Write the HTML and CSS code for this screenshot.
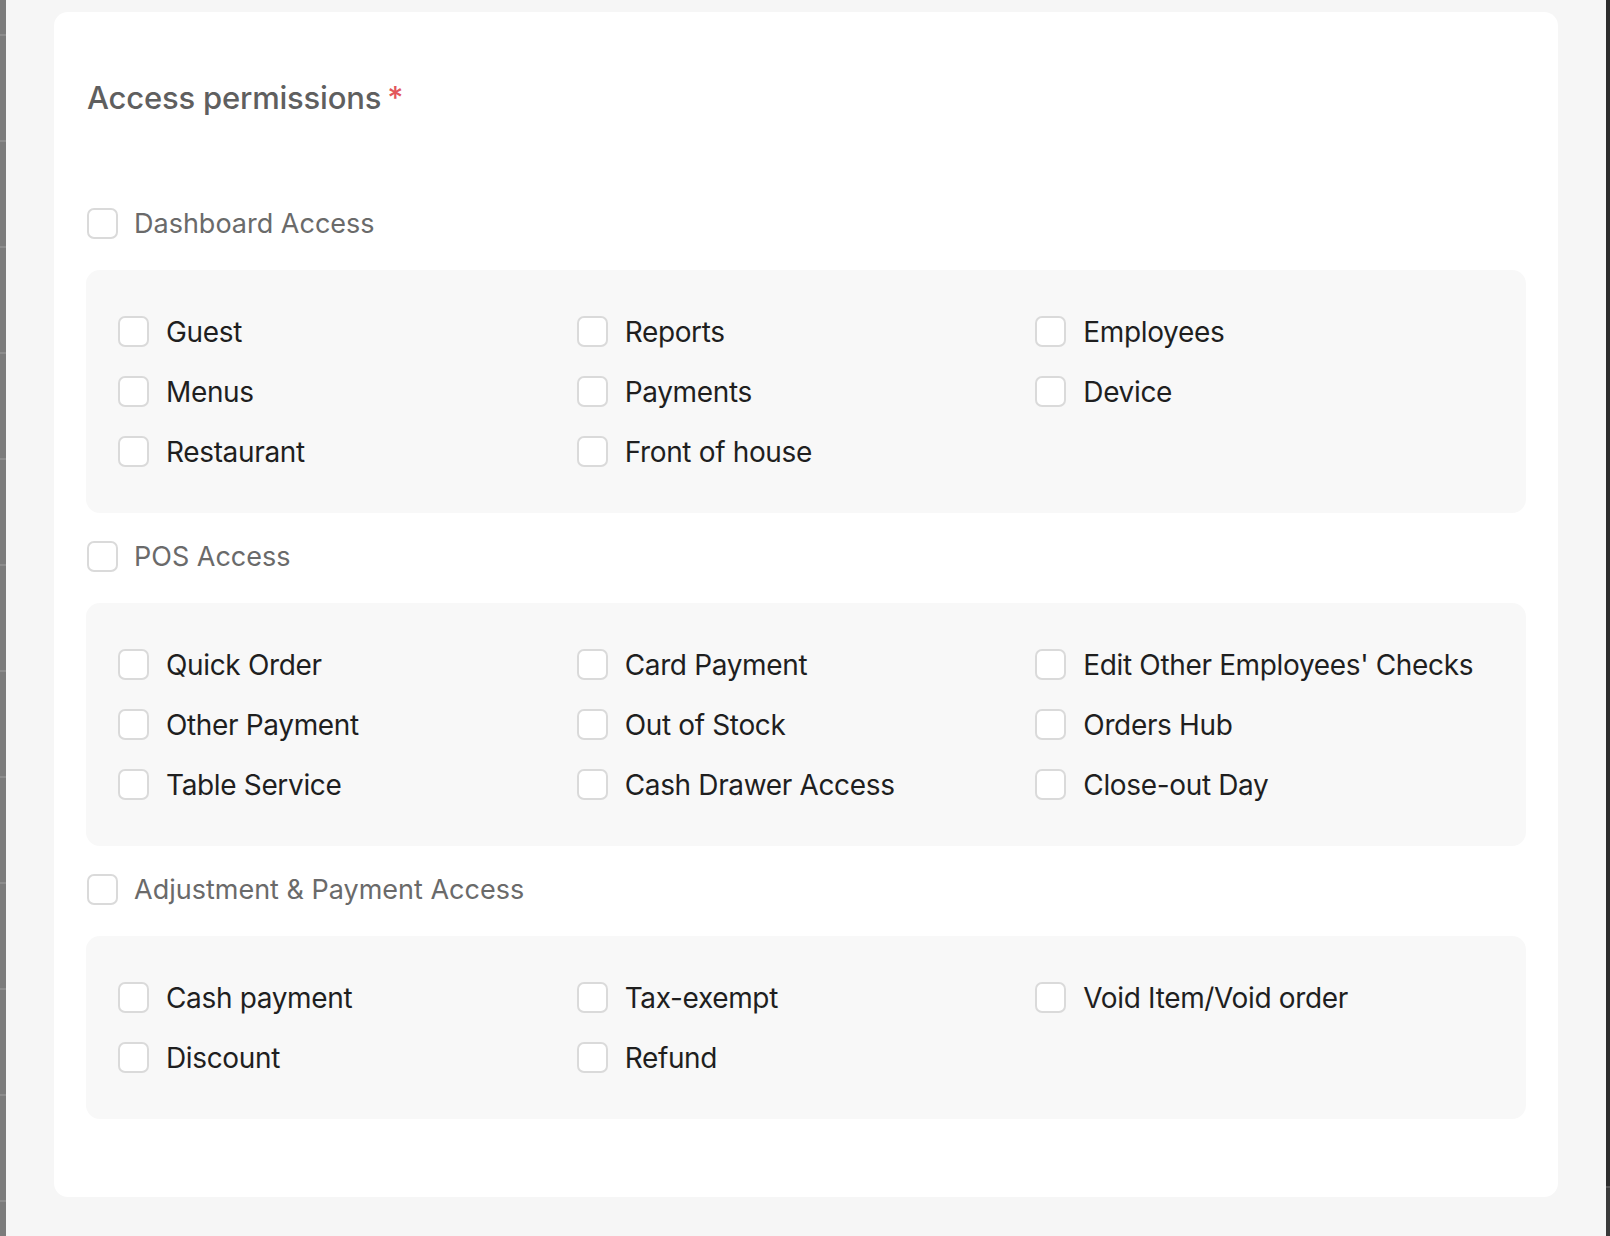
FILE: index.html
```html
<!DOCTYPE html>
<html lang="en">
<head>
<meta charset="utf-8">
<title>Access permissions</title>
<link rel="stylesheet" href="styles.css">
</head>
<body>
<div class="edge-left"></div>
<main class="stage">
  <section class="card">
    <h2 class="title">Access permissions <span class="req">*</span></h2>

    <label class="group-head"><input type="checkbox" class="cb"><span>Dashboard Access</span></label>
    <div class="panel">
      <label class="item"><input type="checkbox" class="cb"><span>Guest</span></label>
      <label class="item"><input type="checkbox" class="cb"><span>Reports</span></label>
      <label class="item"><input type="checkbox" class="cb"><span>Employees</span></label>
      <label class="item"><input type="checkbox" class="cb"><span>Menus</span></label>
      <label class="item"><input type="checkbox" class="cb"><span>Payments</span></label>
      <label class="item"><input type="checkbox" class="cb"><span>Device</span></label>
      <label class="item"><input type="checkbox" class="cb"><span>Restaurant</span></label>
      <label class="item"><input type="checkbox" class="cb"><span>Front of house</span></label>
    </div>

    <label class="group-head"><input type="checkbox" class="cb"><span>POS Access</span></label>
    <div class="panel">
      <label class="item"><input type="checkbox" class="cb"><span>Quick Order</span></label>
      <label class="item"><input type="checkbox" class="cb"><span>Card Payment</span></label>
      <label class="item"><input type="checkbox" class="cb"><span>Edit Other Employees' Checks</span></label>
      <label class="item"><input type="checkbox" class="cb"><span>Other Payment</span></label>
      <label class="item"><input type="checkbox" class="cb"><span>Out of Stock</span></label>
      <label class="item"><input type="checkbox" class="cb"><span>Orders Hub</span></label>
      <label class="item"><input type="checkbox" class="cb"><span>Table Service</span></label>
      <label class="item"><input type="checkbox" class="cb"><span>Cash Drawer Access</span></label>
      <label class="item"><input type="checkbox" class="cb"><span>Close-out Day</span></label>
    </div>

    <label class="group-head"><input type="checkbox" class="cb"><span>Adjustment &amp; Payment Access</span></label>
    <div class="panel">
      <label class="item"><input type="checkbox" class="cb"><span>Cash payment</span></label>
      <label class="item"><input type="checkbox" class="cb"><span>Tax-exempt</span></label>
      <label class="item"><input type="checkbox" class="cb"><span>Void Item/Void order</span></label>
      <label class="item"><input type="checkbox" class="cb"><span>Discount</span></label>
      <label class="item"><input type="checkbox" class="cb"><span>Refund</span></label>
    </div>
  </section>
</main>
<div class="edge-right"></div>
</body>
</html>
```

FILE: styles.css
```css
html, body {
  margin: 0;
  padding: 0;
}

body {
  width: 1610px;
  height: 1236px;
  overflow: hidden;
  display: flex;
  background: #f6f6f6;
  font-family: Inter, "Noto Sans", "Liberation Sans", sans-serif;
}

.edge-left {
  width: 6px;
  flex: none;
  background-color: #7c7c7c;
  background-image: repeating-linear-gradient(to bottom,
    transparent 0, transparent 34px,
    #8d8d8d 34px, #8d8d8d 36px,
    transparent 36px, transparent 106px);
}

.edge-right {
  width: 4px;
  flex: none;
  background: linear-gradient(to bottom, #2d2d2d 0, #2d2d2d 1186px, #555 1186px, #555 1188px, #3a3a3a 1188px);
}

.stage {
  flex: 1;
  padding: 12px 0 0 48px;
}

.card {
  box-sizing: border-box;
  width: 1504px;
  height: 1185px;
  background: #ffffff;
  border-radius: 14px;
  padding: 66px 32px 0 32px;
}

.title {
  margin: 0 0 90px 1px;
  font-size: 31px;
  line-height: 40px;
  font-weight: 500;
  color: #5f5f5f;
  letter-spacing: -0.2px;
}

.req {
  color: #e2565c;
  font-weight: 500;
  margin-left: -2px;
}

.cb {
  -webkit-appearance: none;
  appearance: none;
  margin: 0;
  flex: none;
  box-sizing: border-box;
  width: 31px;
  height: 31px;
  border: 2px solid #dadada;
  border-radius: 7px;
  background: #ffffff;
}

.group-head {
  display: flex;
  align-items: center;
  gap: 16px;
  height: 31px;
  margin: 28px 0 0 1px;
  font-size: 27px;
  color: #6a6a6a;
}

.card .group-head:first-of-type {
  margin-top: 0;
}

.panel {
  margin-top: 31px;
  background: #f8f8f8;
  border-radius: 14px;
  padding: 46px 32px;
  display: grid;
  grid-template-columns: repeat(3, 1fr);
  row-gap: 29px;
}

.item {
  display: flex;
  align-items: center;
  gap: 17px;
  height: 31px;
  font-size: 28px;
  letter-spacing: -0.35px;
  color: #1f1f1f;
  white-space: nowrap;
}
```
